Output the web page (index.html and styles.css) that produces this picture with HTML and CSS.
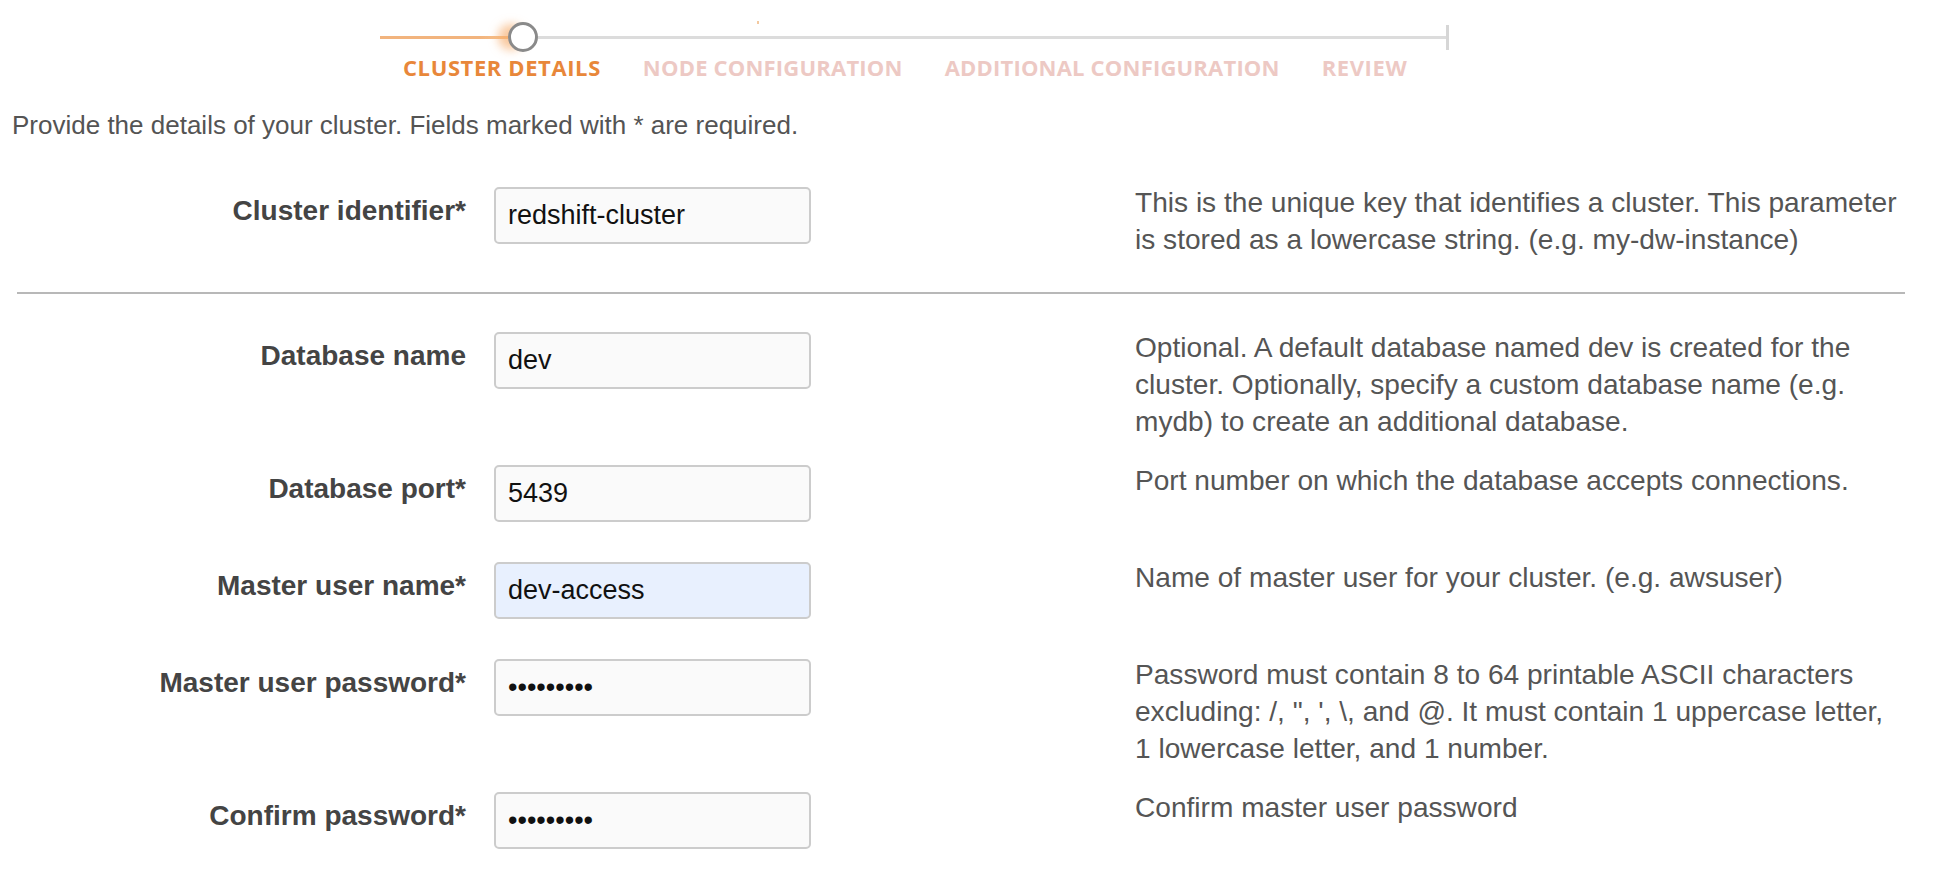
FILE: index.html
```html
<!DOCTYPE html>
<html lang="en">
<head>
<meta charset="utf-8">
<title>Cluster details</title>
<link rel="stylesheet" href="styles.css">
</head>
<body>
<div class="page">
  <div class="wizard">
    <div class="track">
      <span class="seg seg-done"></span>
      <span class="node"></span>
      <span class="seg seg-todo"></span>
      <span class="track-end"></span>
      <span class="speck"></span>
    </div>
    <ol class="steps">
      <li class="step step-active">CLUSTER DETAILS</li>
      <li class="step">NODE CONFIGURATION</li>
      <li class="step">ADDITIONAL CONFIGURATION</li>
      <li class="step step-last">REVIEW</li>
    </ol>
  </div>

  <p class="intro">Provide the details of your cluster. Fields marked with * are required.</p>

  <div class="form">
    <div class="row">
      <label class="lbl" for="f1">Cluster identifier*</label>
      <input class="field" id="f1" type="text" value="redshift-cluster">
      <p class="help">This is the unique key that identifies a cluster. This parameter is stored as a lowercase string. (e.g. my-dw-instance)</p>
    </div>
    <hr class="divider">
    <div class="row">
      <label class="lbl" for="f2">Database name</label>
      <input class="field" id="f2" type="text" value="dev">
      <p class="help">Optional. A default database named dev is created for the cluster. Optionally, specify a custom database name (e.g. mydb) to create an additional database.</p>
    </div>
    <div class="row">
      <label class="lbl" for="f3">Database port*</label>
      <input class="field" id="f3" type="text" value="5439">
      <p class="help">Port number on which the database accepts connections.</p>
    </div>
    <div class="row">
      <label class="lbl" for="f4">Master user name*</label>
      <input class="field field-autofill" id="f4" type="text" value="dev-access">
      <p class="help">Name of master user for your cluster. (e.g. awsuser)</p>
    </div>
    <div class="row">
      <label class="lbl" for="f5">Master user password*</label>
      <input class="field" id="f5" type="password" value="Secret123">
      <p class="help">Password must contain 8 to 64 printable ASCII characters excluding: /, ", ', \, and @. It must contain 1 uppercase letter, 1 lowercase letter, and 1 number.</p>
    </div>
    <div class="row">
      <label class="lbl" for="f6">Confirm password*</label>
      <input class="field" id="f6" type="password" value="Secret123">
      <p class="help">Confirm master user password</p>
    </div>
  </div>
</div>
</body>
</html>
```

FILE: styles.css
```css
html, body {
  margin: 0;
  padding: 0;
  background: #ffffff;
}

body {
  font-family: "Liberation Sans", Arial, Helvetica, sans-serif;
  color: #555555;
  width: 1938px;
  height: 888px;
  overflow: hidden;
}

/* ---------- wizard stepper ---------- */
.wizard {
  padding-top: 22px;
}

.track {
  position: relative;
  display: flex;
  align-items: center;
  margin-left: 380px;
  width: 1069px;
  height: 30px;
}

.seg {
  height: 3px;
}

.seg-done {
  width: 128px;
  background: linear-gradient(to right, #f2b47e 0%, #f2b47e 78%, #f8c48e 100%);
}

.seg-todo {
  flex: 1;
  background: #dcdcdc;
}

.node {
  position: relative;
  box-sizing: border-box;
  width: 30px;
  height: 30px;
  border: 3px solid #8a8a8a;
  border-radius: 50%;
  background: #ffffff;
  box-shadow: -12px 0 10px -2px rgba(245, 165, 95, 0.6);
}

.track-end {
  width: 3px;
  height: 25px;
  background: #d6d6d6;
}

.speck {
  position: absolute;
  left: 377px;
  top: -1px;
  width: 2px;
  height: 3px;
  background: #f3c9a0;
}

.steps {
  display: flex;
  gap: 42px;
  list-style: none;
  margin: 3px 0 0 403px;
  padding: 0;
}

.step {
  font-family: "Open Sans", "DejaVu Sans", sans-serif;
  font-weight: 700;
  font-size: 22px;
  line-height: 24px;
  letter-spacing: 0.2px;
  color: #edc9c4;
}

.step-active {
  color: #e8873a;
  letter-spacing: 0.6px;
}

.step-last {
  letter-spacing: 0.6px;
}

/* ---------- intro ---------- */
.intro {
  margin: 31px 0 0 12px;
  font-size: 26px;
  line-height: 30px;
  color: #545454;
}

/* ---------- form ---------- */
.form {
  margin-top: 47px;
}

.row {
  display: grid;
  grid-template-columns: 466px 317px 1062px;
  column-gap: 28px;
  align-items: start;
}

.lbl {
  margin-top: 5px;
  text-align: right;
  font-size: 28px;
  line-height: 37px;
  font-weight: 700;
  color: #444444;
}

.field {
  box-sizing: border-box;
  width: 317px;
  height: 57px;
  margin: 0 0 40px 0;
  padding: 0 12px;
  border: 2px solid #cccccc;
  border-radius: 5px;
  background: #fafafa;
  font-family: "Liberation Sans", Arial, Helvetica, sans-serif;
  font-size: 27px;
  color: #111111;
  outline: none;
}

.field-autofill {
  background: #e8f0fe;
}

.help {
  width: 766px;
  margin: -3px 0 25px 296px;
  font-size: 28.1px;
  line-height: 37px;
  color: #555555;
}

.divider {
  margin: 8px 33px 38px 17px;
  height: 2px;
  border: 0;
  background: #b8b8b8;
}
```
